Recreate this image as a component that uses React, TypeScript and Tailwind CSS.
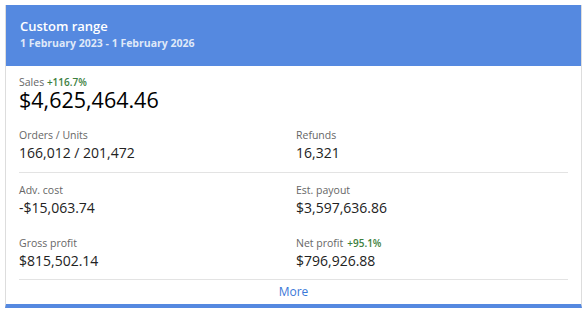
import React from 'react';

type Stat = {
  label: string;
  value: string;
  change?: string;
};

const StatCell: React.FC<{ stat: Stat; className?: string }> = ({ stat, className }) => (
  <div className={className}>
    <div className="text-[10.5px] leading-[14px] text-[#666]">
      {stat.label}
      {stat.change && (
        <span className="ml-1 text-[10px] font-semibold text-[#3d7f3d]">{stat.change}</span>
      )}
    </div>
    <div className="mt-[2px] text-[14px] leading-[18px] text-[#222]">{stat.value}</div>
  </div>
);

export default function App() {
  return (
    <div className="bg-white w-[588px] h-[316px] pt-[5px] pl-[5px]" style={{ fontFamily: '"Open Sans", sans-serif' }}>
      <div className="w-[577px] border-x border-[#dddddd] border-b-4 border-b-[#5589e0] bg-white">
        <div className="h-[61px] bg-[#5589e0] px-[14px] pt-[12px] text-white">
          <div className="text-[13px] leading-[18px] font-semibold">Custom range</div>
          <div className="mt-[1px] text-[10.5px] leading-[14px] font-bold text-[#dfe8f8]">
            1 February 2023 - 1 February 2026
          </div>
        </div>
        <div className="px-[13px] pt-[9px]">
          <div className="text-[10.5px] leading-[14px] text-[#666]">
            Sales <span className="text-[10px] font-semibold text-[#3d7f3d]">+116.7%</span>
          </div>
          <div className="text-[21.5px] leading-[22px] text-black">$4,625,464.46</div>
          <div className="mt-[17px] flex border-b border-[#e3e3e3] pb-[10px]">
            <StatCell className="flex-1" stat={{ label: 'Orders / Units', value: '166,012 / 201,472' }} />
            <StatCell className="w-[272px]" stat={{ label: 'Refunds', value: '16,321' }} />
          </div>
          <div className="mt-[10px] flex">
            <StatCell className="flex-1" stat={{ label: 'Adv. cost', value: '-$15,063.74' }} />
            <StatCell className="w-[272px]" stat={{ label: 'Est. payout', value: '$3,597,636.86' }} />
          </div>
          <div className="mt-[19px] flex border-b border-[#e3e3e3] pb-[9px]">
            <StatCell className="flex-1" stat={{ label: 'Gross profit', value: '$815,502.14' }} />
            <StatCell className="w-[272px]" stat={{ label: 'Net profit', value: '$796,926.88', change: '+95.1%' }} />
          </div>
          <div className="h-[24px] flex items-center justify-center text-[12px] text-[#3b78d8]">More</div>
        </div>
      </div>
    </div>
  );
}
